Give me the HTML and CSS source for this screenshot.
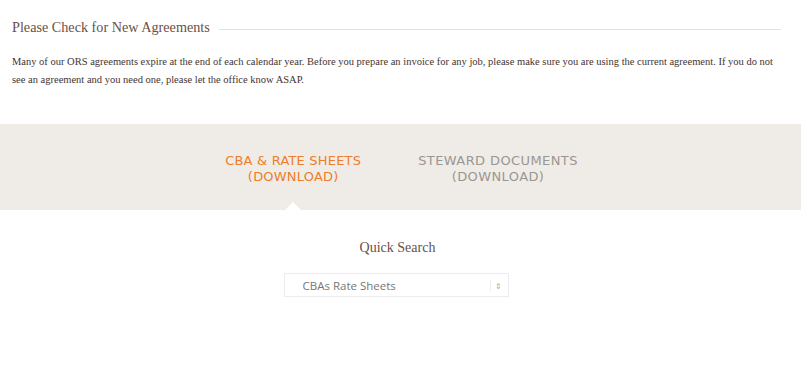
FILE: index.html
```html
<!DOCTYPE html>
<html lang="en">
<head>
    <meta charset="UTF-8">
    <meta name="viewport" content="width=device-width, initial-scale=1.0">
    <title>Agreements</title>
    <link rel="stylesheet" href="styles.css">
</head>
<body>

    <div class="notice">
        <div class="notice-title">
            <h3>Please Check for New Agreements</h3>
            <span class="rule"></span>
        </div>
        <p>Many of our ORS agreements expire at the end of each calendar year. Before you prepare an invoice for any job, please make sure you are using the current agreement. If you do not see an agreement and you need one, please let the office know ASAP.</p>
    </div>

    <div class="tabs">
        <a class="tab active" href="#">CBA &amp; RATE SHEETS<br>(DOWNLOAD)</a>
        <a class="tab" href="#">STEWARD DOCUMENTS<br>(DOWNLOAD)</a>
    </div>

    <div class="search">
        <h4>Quick Search</h4>
        <div class="select">
            <span>CBAs Rate Sheets</span>
            <span class="arrows">&#8661;</span>
        </div>
    </div>

</body>
</html>
```

FILE: styles.css
```css
body {
    margin: 0;
    background-color: #ffffff;
    font-family: "Liberation Serif", serif;
    color: #4a3b36;
}
.notice {
    padding: 19px 20px 0 12px;
}
.notice-title {
    display: flex;
    align-items: center;
    gap: 9px;
}
.notice-title h3 {
    margin: 0;
    font-weight: normal;
    font-size: 14.2px;
    color: #6b5046;
    white-space: nowrap;
}
.rule {
    flex: 1;
    height: 1px;
    background-color: #e2e2e2;
    margin-top: 3px;
}
.notice p {
    margin: 17px 0 0;
    font-size: 10.5px;
    line-height: 18px;
    color: #3f3431;
}
.tabs {
    margin-top: 35px;
    height: 86px;
    background-color: #efece7;
    display: flex;
    justify-content: center;
    gap: 57px;
    padding-left: 2px;
}
.tab {
    position: relative;
    margin-top: 29px;
    font-family: "DejaVu Sans", sans-serif;
    font-size: 13px;
    line-height: 16px;
    text-align: center;
    text-decoration: none;
    color: #9a9692;
    letter-spacing: 0.2px;
}
.tab + .tab {
    letter-spacing: 0.4px;
}
.tab.active {
    color: #ee7d2a;
}
.tab.active::after {
    content: "";
    position: absolute;
    left: 50%;
    top: 49px;
    margin-left: -8px;
    border-left: 8px solid transparent;
    border-right: 8px solid transparent;
    border-bottom: 8px solid #ffffff;
}
.search {
    text-align: center;
    padding-top: 30px;
}
.search h4 {
    margin: 0;
    font-weight: normal;
    font-size: 14px;
    color: #6b5046;
    padding-right: 6px;
}
.select {
    width: 225px;
    height: 24px;
    margin: 17px 0 0 calc(50% - 117px);
    border: 1px solid #ececec;
    display: flex;
    align-items: center;
    justify-content: space-between;
    padding: 0 6px 0 18px;
    box-sizing: border-box;
    font-family: "Open Sans", sans-serif;
    font-size: 11.5px;
    color: #777777;
}
.arrows {
    font-size: 8px;
    color: #aaaaaa;
    border-left: 1px solid #eeeeee;
    padding-left: 4px;
}
```
